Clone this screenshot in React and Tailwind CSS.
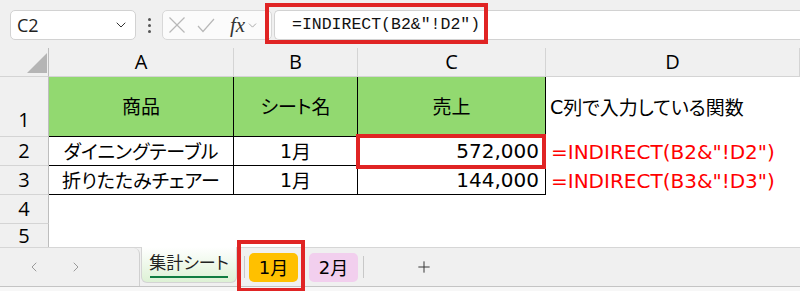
import React from "react";
import { ChevronDown, ChevronLeft, ChevronRight, Plus } from "lucide-react";

const jp = "font-['Noto_Sans_CJK_JP',sans-serif] [font-feature-settings:'palt']";
const num = "font-['DejaVu_Sans',sans-serif]";

const App = () => {
  const hdr = "bg-[#f0f0f0] border-r border-b border-[#d4d4d4] flex items-center justify-center text-[20px] text-black font-['Open_Sans',sans-serif]";
  const rowHdr = "bg-[#f0f0f0] border-r border-b border-r-[#bdbdbd] border-b-[#d4d4d4] flex justify-center text-[20px] text-black font-['Open_Sans',sans-serif]";
  const green = "bg-[#92d970] border-r border-b border-black flex items-center justify-center text-[19px] text-black";
  const cell = "bg-white border-r border-b border-black flex items-center text-[19px] text-black";
  const red = "bg-white flex items-center pl-[5px] text-[20px] text-[#ff0000] whitespace-nowrap";

  return (
    <div className="w-[800px] h-[291px] overflow-hidden bg-[#f0f0f0] font-['Liberation_Sans',sans-serif]">
      {/* Toolbar */}
      <div className="relative h-[48px] flex items-start pt-[10px] pl-[10px]">
        <div className="w-[126px] h-[30px] rounded-[5px] border border-[#d2d2d2] bg-white flex items-center justify-between pl-[6px] pr-[6px]">
          <span className="text-[18px] text-[#222] font-['Open_Sans',sans-serif]">C2</span>
          <ChevronDown size={16} strokeWidth={1.5} className="text-[#333]" />
        </div>
        <div className="w-[26px] h-[30px] flex flex-col items-center justify-center gap-[3px]">
          <span className="w-[3px] h-[3px] bg-[#555] rounded-full" />
          <span className="w-[3px] h-[3px] bg-[#555] rounded-full" />
          <span className="w-[3px] h-[3px] bg-[#555] rounded-full" />
        </div>
        <div className="w-[110px] h-[30px] rounded-[5px] border border-[#d8d8d8] bg-[#fbfbfb] flex items-center pl-[5px]">
          <svg width="18" height="18" viewBox="0 0 18 18" fill="none" stroke="#b8b8b8" strokeWidth="1.2">
            <line x1="1.5" y1="1.5" x2="16.5" y2="16.5" />
            <line x1="16.5" y1="1.5" x2="1.5" y2="16.5" />
          </svg>
          <svg width="18" height="18" viewBox="0 0 18 18" fill="none" stroke="#b8b8b8" strokeWidth="1.2" className="ml-[11px]">
            <polyline points="1,10 6,15.5 17,3" />
          </svg>
          <span className="font-['Liberation_Serif',serif] italic text-[21px] text-[#333] ml-[15px] leading-none">fx</span>
          <ChevronDown size={13} strokeWidth={1.5} className="text-[#999] ml-[1px]" />
        </div>
        <div className="flex-1 ml-[2px] h-[30px] rounded-l-[5px] border border-r-0 border-[#d2d2d2] bg-white flex items-center pl-[17px]">
          <span className="font-['Liberation_Mono',monospace] text-[16.5px] text-[#111] whitespace-nowrap">=INDIRECT(B2&amp;"!D2")</span>
        </div>
        <div className="absolute left-[265px] top-[3px] w-[223px] h-[41px] border-4 border-[#e02424]" />
      </div>

      {/* Grid */}
      <div className="grid grid-cols-[49px_185px_124px_188px_1fr] grid-rows-[29px_60px_29px_29px_29px_23px]">
        <div className={hdr + " !items-end !justify-end pr-[1px] pb-[3px] !border-r-[#bdbdbd]"}>
          <svg width="20" height="20" viewBox="0 0 20 20">
            <polygon points="20,0 20,20 0,20" fill="#b5b5b5" />
          </svg>
        </div>
        <div className={hdr}>A</div>
        <div className={hdr}>B</div>
        <div className={hdr}>C</div>
        <div className={hdr}>D</div>

        <div className={rowHdr + " items-end pb-[1px]"}>1</div>
        <div className={green + " " + jp}>商品</div>
        <div className={green + " " + jp}>シート名</div>
        <div className={green + " " + jp}>売上</div>
        <div className={"bg-white flex items-center pl-[4px] text-[19px] text-black " + jp}>
          <span className={num}>C</span>列で入力している関数
        </div>

        <div className={rowHdr + " items-center"}>2</div>
        <div className={cell + " justify-center " + jp}>ダイニングテーブル</div>
        <div className={cell + " justify-center " + jp}>
          <span className={num}>1</span>月
        </div>
        <div className={cell + " relative justify-end pr-[6px] text-[20px] " + num}>
          572,000
          <div className="absolute -left-[2px] -top-[3px] -right-[1px] -bottom-[4px] border-4 border-[#e02424]" />
        </div>
        <div className={red + " " + num}>=INDIRECT(B2&amp;"!D2")</div>

        <div className={rowHdr + " items-center"}>3</div>
        <div className={cell + " justify-center " + jp}>折りたたみチェアー</div>
        <div className={cell + " justify-center " + jp}>
          <span className={num}>1</span>月
        </div>
        <div className={cell + " justify-end pr-[6px] text-[20px] " + num}>144,000</div>
        <div className={red + " " + num}>=INDIRECT(B3&amp;"!D3")</div>

        <div className={rowHdr + " items-center"}>4</div>
        <div className="bg-white col-span-4" />

        <div className={rowHdr + " items-center !border-b-0"}>5</div>
        <div className="bg-white col-span-4" />
      </div>

      {/* Sheet tabs */}
      <div className="relative h-[40px] border-t border-b border-t-[#d6d6d6] border-b-[#c4c4c4] bg-[#f0f0f0] flex items-center">
        <div className="w-[140px] h-full border-r border-[#d0d0d0] rounded-tr-[6px] flex items-center pl-[26px] gap-[26px] text-[#9a9a9a]">
          <ChevronLeft size={16} strokeWidth={1.5} />
          <ChevronRight size={16} strokeWidth={1.5} />
        </div>
        <div className="self-start -mt-px ml-[1px] w-[96px] h-[36px] rounded-b-[6px] border-x border-b border-[#d4d4d4] bg-gradient-to-b from-white to-[#ddf1d5] flex flex-col items-center justify-center">
          <span className={"text-[17px] text-[#222] leading-[22px] " + jp}>集計シート</span>
          <span className="w-[78px] h-[2px] bg-[#107c41] mt-[3px]" />
        </div>
        <div className="ml-[7px] w-px h-[22px] bg-[#c8c8c8]" />
        <div className={"ml-[4px] w-[49px] h-[29px] rounded-[5px] bg-[#ffc000] flex items-center justify-center text-[18px] text-black " + jp}>
          <span className={num}>1</span>月
        </div>
        <div className={"ml-[11px] w-[49px] h-[29px] rounded-[5px] bg-[#f2cfee] flex items-center justify-center text-[18px] text-black " + jp}>
          <span className={num}>2</span>月
        </div>
        <div className="ml-[5px] w-px h-[22px] bg-[#c8c8c8]" />
        <Plus size={18} strokeWidth={1.3} className="ml-[51px] text-[#333]" />
        <div className="absolute left-[237px] -top-[8px] w-[68px] h-[52px] border-4 border-[#e02424]" />
      </div>
      <div className="h-[4px] bg-[#f7f7f7]" />
    </div>
  );
};

export default App;
